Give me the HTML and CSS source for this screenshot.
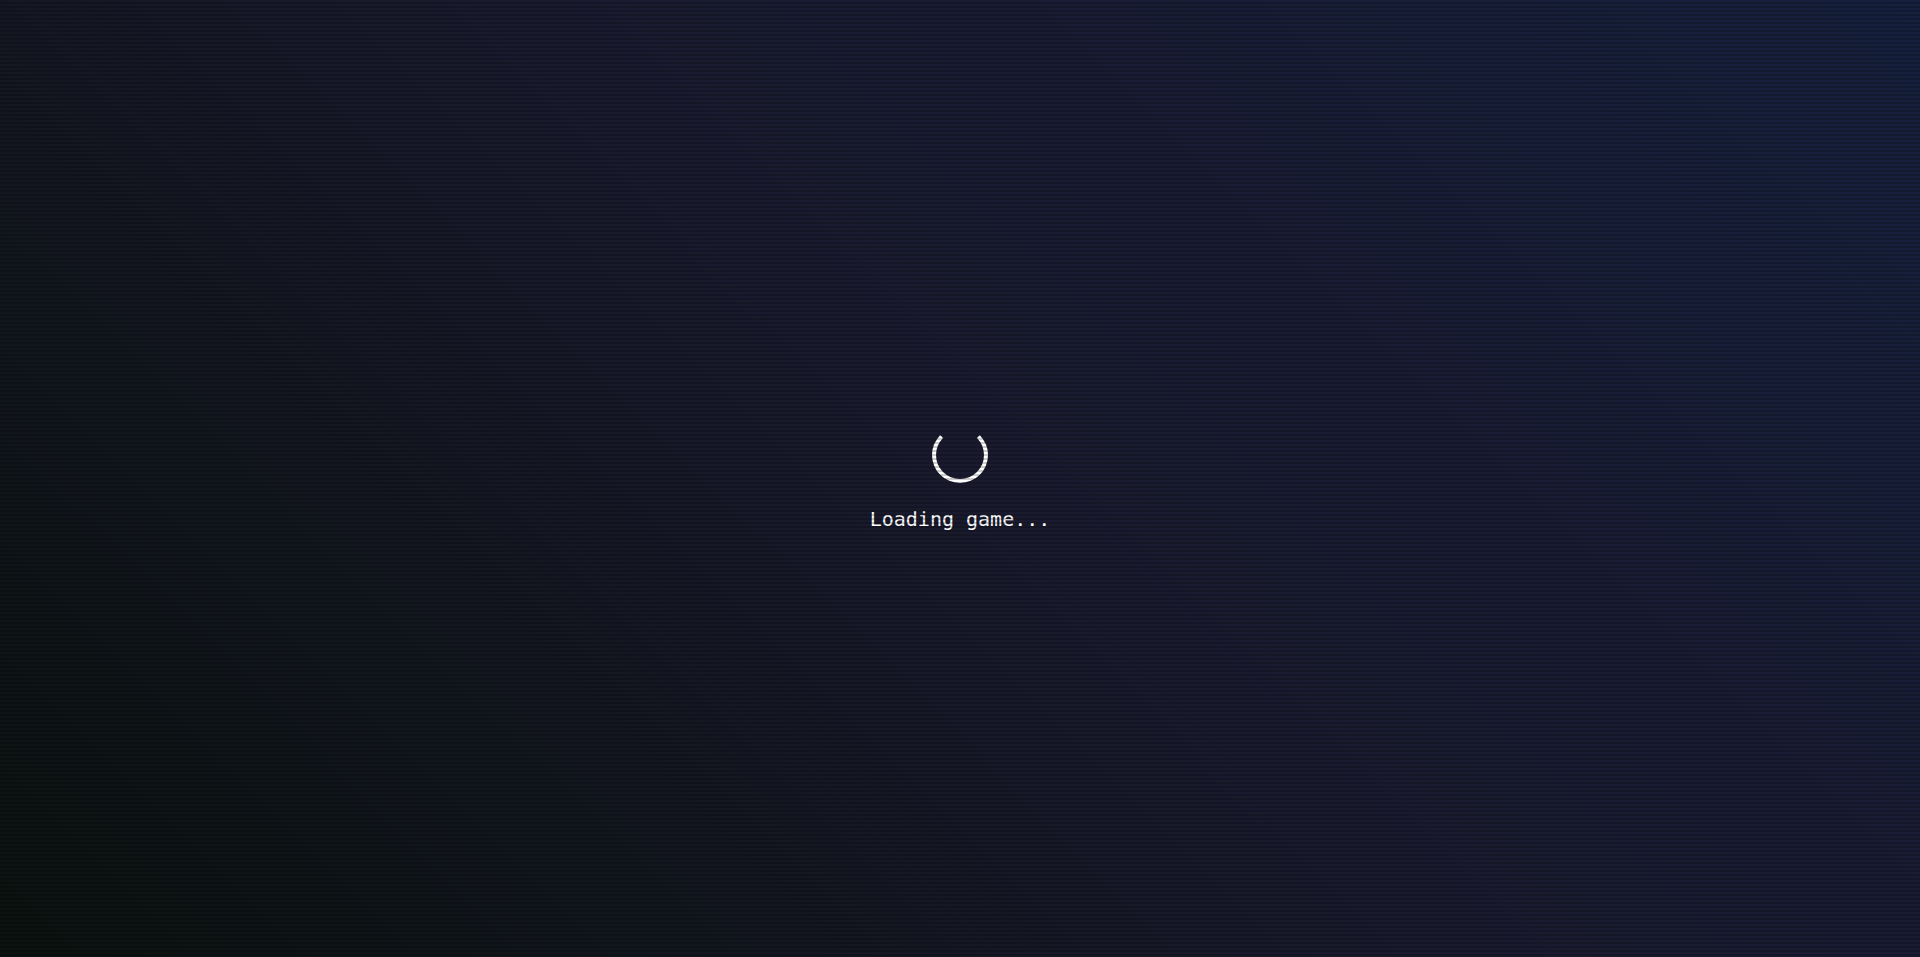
FILE: index.html
```html
<!DOCTYPE html>
<html lang="en">
<head>
<meta charset="utf-8">
<title>Loading game...</title>
<link rel="stylesheet" href="styles.css">
</head>
<body>
<div class="screen">
  <div class="loader">
    <div class="spinner"></div>
    <p class="loading-text">Loading game...</p>
  </div>
</div>
</body>
</html>
```
FILE: styles.css
```css
html, body {
  margin: 0;
  padding: 0;
  height: 100%;
}
body {
  background: linear-gradient(45deg, #0b120f 0%, #1a1a2e 50%, #16213e 100%);
  font-family: "DejaVu Sans Mono", "Liberation Mono", monospace;
  overflow: hidden;
}
.screen {
  position: relative;
  height: 100vh;
  display: flex;
  align-items: center;
  justify-content: center;
}
.screen::after {
  content: "";
  position: absolute;
  inset: 0;
  pointer-events: none;
  background: linear-gradient(rgba(18, 16, 16, 0) 50%, rgba(0, 0, 0, 0.2) 50%);
  background-size: 100% 4px;
}
.loader {
  display: flex;
  flex-direction: column;
  align-items: center;
  gap: 24px;
}
.spinner {
  width: 48px;
  height: 48px;
  border: 4px solid #ffffff;
  border-top-color: transparent;
  border-radius: 50%;
}
.loading-text {
  margin: 0;
  color: #ffffff;
  font-size: 20px;
}
```
